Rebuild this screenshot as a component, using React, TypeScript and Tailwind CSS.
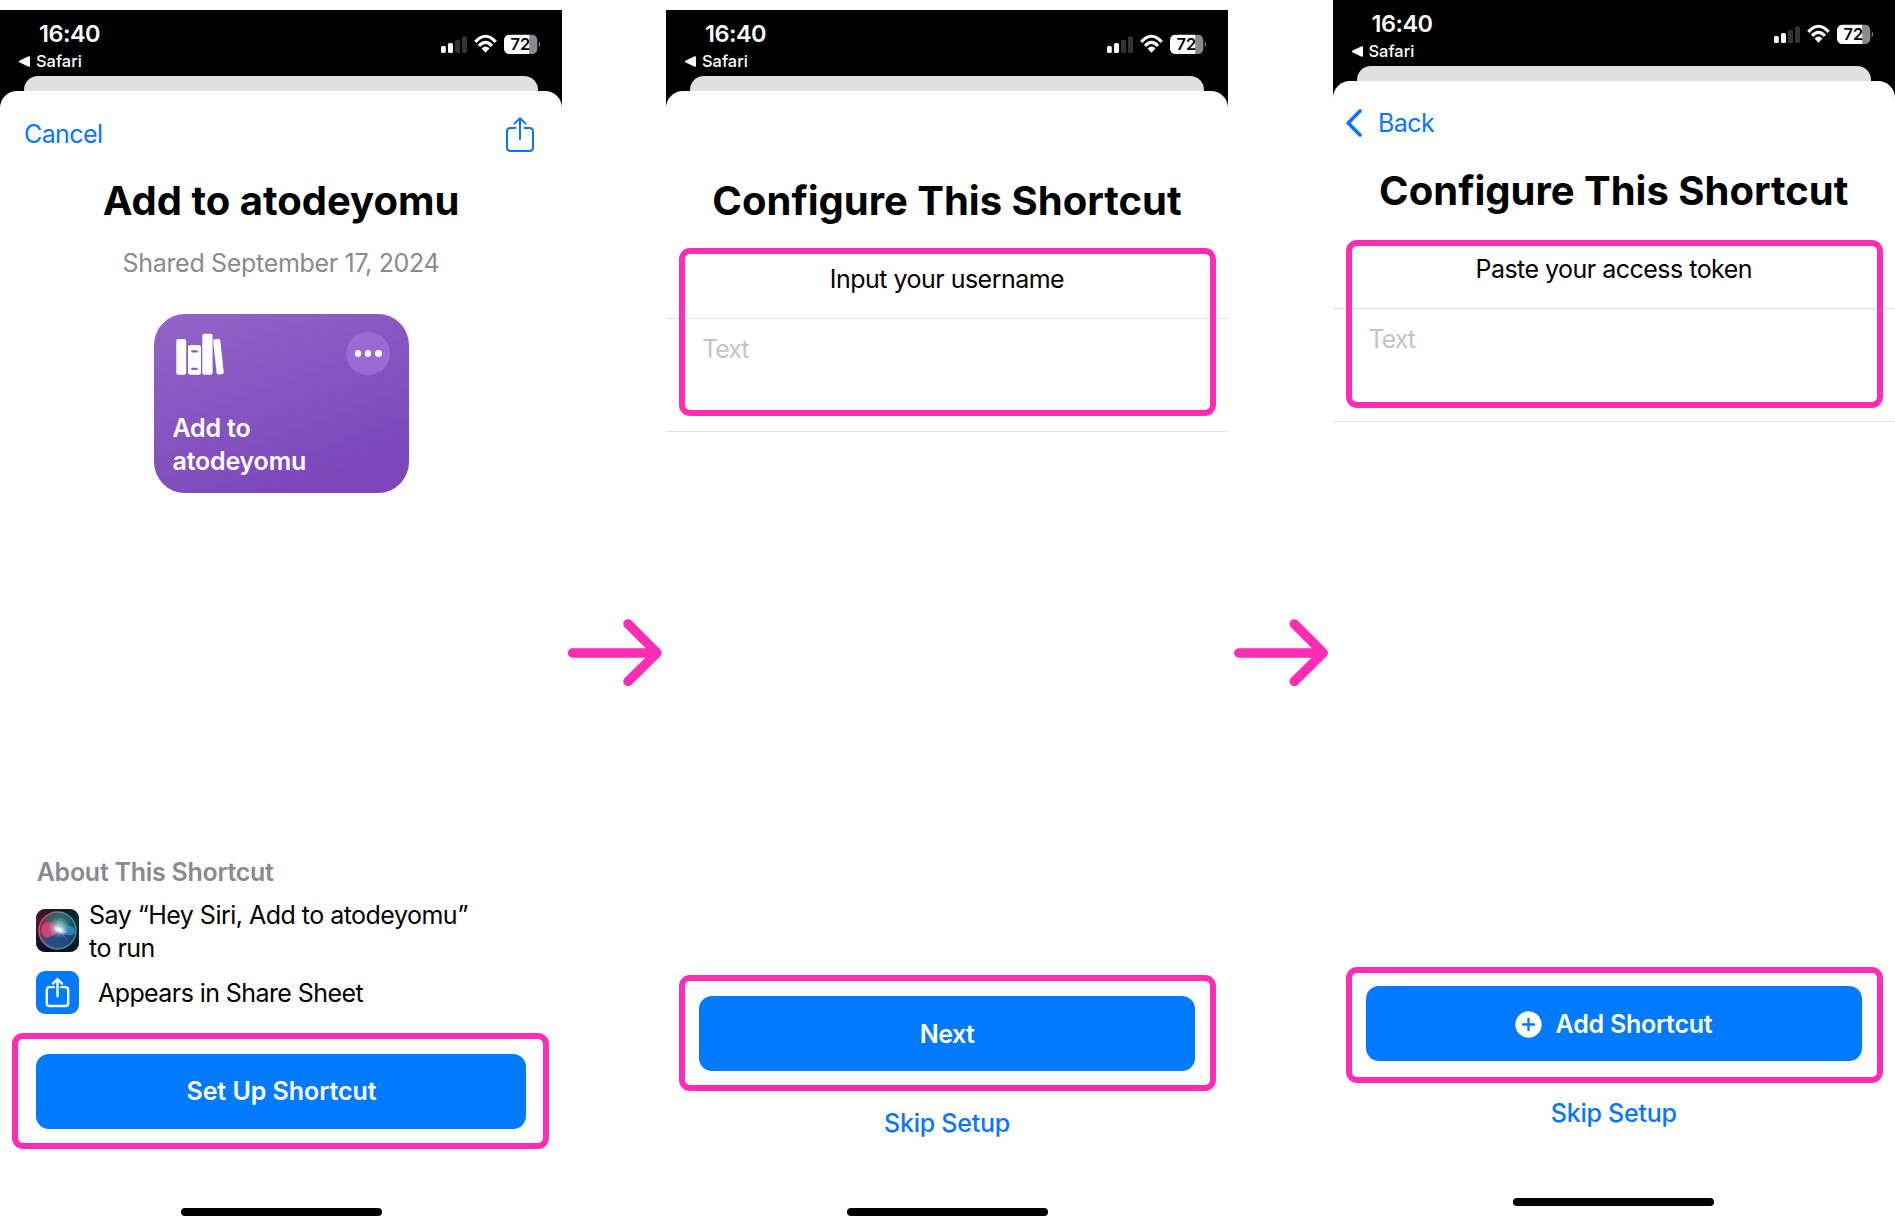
import React from 'react';

function StatusBar() {
  return (
    <div className="flex h-[66px] justify-between bg-black text-white">
      <div className="ml-[19px] pt-[9.5px]">
        <div className="ml-[20px] h-[28px] text-[23.5px] leading-[28px] font-semibold tracking-[-0.5px] whitespace-nowrap">16:40</div>
        <div className="flex h-[27px] items-center gap-[6px] text-[16.4px] font-medium">
          <svg width="11" height="11" viewBox="0 0 11 11" fill="white">
            <path d="M0.3 4.800L9.600 0.300Q11 -0.100 11 1.200V9.800Q11 11.100 9.600 10.700L0.300 6.200Q-0.400 5.500 0.300 4.800Z" />
          </svg>
          <span>Safari</span>
        </div>
      </div>
      <svg className="mt-[24px] mr-[21.5px] h-[22px] w-[101px]" viewBox="0 0 101 22">
        <rect x="1" y="12" width="4.800" height="7" rx="1.6" fill="white" />
        <rect x="8" y="9" width="5" height="10" rx="1.6" fill="white" />
        <rect x="15" y="5.700" width="5" height="13.300" rx="1.6" fill="#333" />
        <rect x="22" y="2.300" width="5" height="16.700" rx="1.6" fill="#333" />
        <path d="M35.300 7.900Q45.500 -3.400 55.700 7.900M39 11.900Q45.500 4.900 52 11.900" fill="none" stroke="white" strokeWidth="3.1" />
        <path d="M45.500 18.800L41.500 14.400Q45.500 10.800 49.500 14.400Z" fill="white" />
        <path d="M89 0.700H91.500Q97.300 0.700 97.300 6.500V14.200Q97.300 20 91.500 20H89Z" fill="#8a8a8a" />
        <path d="M70 0.700H89.200V20H70Q64 20 64 14.200V6.500Q64 0.700 70 0.700Z" fill="white" />
        <path d="M98.800 7Q101.400 10.300 98.800 13.700Z" fill="#8a8a8a" />
        <text x="80.300" y="16.300" textAnchor="middle" fontSize="16.400" fontWeight="600" fontFamily="Inter, sans-serif" fill="black">72</text>
      </svg>
    </div>
  );
}

function Phone({ children, className = '' }: { children: React.ReactNode; className?: string }) {
  return (
    <section className={'flex shrink-0 flex-col ' + className}>
      <StatusBar />
      <div className="h-[36px] bg-black px-[24px]">
        <div className="h-[36px] rounded-t-[14px] bg-[#e0e0e0]" />
      </div>
      <div className="-mt-[21px] flex flex-col rounded-t-[17px] bg-white">
        {children}
        <div className="mx-auto h-[8px] w-[201px] rounded-full bg-black" />
      </div>
    </section>
  );
}

function ShareGlyph({ className, stroke }: { className: string; stroke: number }) {
  return (
    <svg className={className} viewBox="0 0 28 35" fill="none" stroke="currentColor" strokeWidth={stroke} strokeLinecap="round" strokeLinejoin="round">
      <path d="M9.500 11H4.500Q1 11 1 14.500V30.500Q1 34 4.500 34H23.500Q27 34 27 30.500V14.500Q27 11 23.500 11H18.500M14 22V1.300M8.500 6.600L14 1.100L19.500 6.600" />
    </svg>
  );
}

function Arrow({ className }: { className: string }) {
  return (
    <svg className={'mt-[617px] h-[72px] shrink-0 overflow-visible ' + className} viewBox="0 0 104 72" fill="none" stroke="#ff2db5" strokeWidth="9.5" strokeLinecap="round" strokeLinejoin="round">
      <path d="M10.500 36H94M66 6.900L95 35.800L66 64.500" />
    </svg>
  );
}

function Title({ children }: { children: string }) {
  return <h1 className="h-[48px] text-center text-[40px] leading-[48px] font-bold">{children}</h1>;
}

function Field({ label, tracking, highlight }: { label: string; tracking: string; highlight: string }) {
  return (
    <div className="relative h-[207px]">
      <div className="h-[94px] border-b border-[#e2e2e4] pt-[39px]">
        <p className={'text-center text-[25px] leading-[30px] ' + tracking}>{label}</p>
      </div>
      <div className="h-[113px] border-b border-[#e2e2e4] pt-[15px] pl-[36px] text-[25px] leading-[30px] tracking-[-1px] text-[#c4c4c6]">
        Text
      </div>
      <div className={'absolute left-[13px] w-[537px] rounded-[11px] border-[6px] border-[#ff2db5] ' + highlight} />
    </div>
  );
}

function Action({ children, className }: { children: React.ReactNode; className: string }) {
  return (
    <div className={'ml-[13px] w-[537px] rounded-[11px] border-[6px] border-[#ff2db5] pr-[15px] pl-[14px] ' + className}>
      <div className="flex h-[75px] items-center justify-center rounded-[13px] bg-[#007aff] pt-[2px] text-[25px] font-semibold text-white">{children}</div>
    </div>
  );
}

function Skip({ className }: { className: string }) {
  return (
    <p className={'text-center text-[25px] leading-[30px] font-medium tracking-[-0.25px] text-[#0a75ff] ' + className}>Skip Setup</p>
  );
}

function Books() {
  return (
    <svg className="mt-[19px] ml-[22px] h-[42px] w-[49px]" viewBox="0 0 49 42" fill="white">
      <rect x="0.300" y="6" width="9.900" height="35.700" rx="2" />
      <path fillRule="evenodd" d="M14.200 12H22.800Q25 12 25 14.200V39.500Q25 41.700 22.800 41.700H14.200Q12 41.700 12 39.500V14.200Q12 12 14.200 12ZM16.200 17.300A1 1 0 0 0 16.200 19.500H20.800A1 1 0 0 0 20.800 17.300ZM16.200 34.700A1 1 0 0 0 16.200 36.900H20.800A1 1 0 0 0 20.800 34.700Z" />
      <rect x="26.300" y="0.700" width="10.300" height="41" rx="2" />
      <path d="M37.500 6.300L42.200 5.900Q44 5.800 44.300 7.600L47.700 39Q47.900 40.900 46 41.200L42.600 41.500Q40.900 41.600 40.600 39.800L37.300 10Z" />
    </svg>
  );
}

function Siri() {
  return (
    <svg className="h-[43px] w-[43px] shrink-0" viewBox="0 0 43 43">
      <defs>
        <linearGradient id="base" x1="0" y1="0" x2="1" y2="0.300">
          <stop offset="0" stopColor="#6a1030" />
          <stop offset="0.500" stopColor="#1c2433" />
          <stop offset="1" stopColor="#0c3530" />
        </linearGradient>
        <linearGradient id="shade" x1="0" y1="0" x2="0" y2="1">
          <stop offset="0" stopColor="#080c14" stopOpacity="0.400" />
          <stop offset="0.300" stopColor="#080c14" stopOpacity="0" />
          <stop offset="1" stopColor="#0c0a30" stopOpacity="0.900" />
        </linearGradient>
        <linearGradient id="ring" x1="0" y1="0.200" x2="1" y2="0.700">
          <stop offset="0" stopColor="#e0486f" />
          <stop offset="0.450" stopColor="#4f9a98" />
          <stop offset="1" stopColor="#3a8fa8" />
        </linearGradient>
        <linearGradient id="orb" x1="0" y1="0.300" x2="1" y2="0.600">
          <stop offset="0" stopColor="#8c2048" />
          <stop offset="0.500" stopColor="#3a6070" />
          <stop offset="1" stopColor="#0d4a5c" />
        </linearGradient>
        <radialGradient id="flare">
          <stop offset="0" stopColor="#ffffff" />
          <stop offset="0.300" stopColor="#f2fbff" stopOpacity="0.850" />
          <stop offset="1" stopColor="#a8dcec" stopOpacity="0" />
        </radialGradient>
      </defs>
      <rect width="43" height="43" rx="9" fill="url(#base)" />
      <rect width="43" height="43" rx="9" fill="url(#shade)" />
      <circle cx="21.500" cy="21.500" r="18.500" fill="url(#orb)" stroke="url(#ring)" strokeWidth="1.3" />
      <path d="M9 10Q21 0 34 11Q36 17 23 20Q14 14 9 10Z" fill="#1d7a68" opacity="0.550" />
      <path d="M8 32Q18 25 24 21Q32 25 35 31Q22 44 8 32Z" fill="#1d4590" opacity="0.700" />
      <path d="M23 21Q16 10 8.500 14Q4 18 5.500 24Q10 31 16 27Q20 25 23 21Z" fill="#dc4676" opacity="0.850" />
      <path d="M23 21Q30 14 37 18Q40 21 38 25Q33 29 23 21Z" fill="#2f8bd0" opacity="0.850" />
      <path d="M24 22L33.500 33L28 28Z" fill="#c87aa4" opacity="0.600" />
      <circle cx="23" cy="18.500" r="11" fill="url(#flare)" opacity="0.650" />
      <ellipse cx="23.500" cy="21" rx="8" ry="4.500" fill="url(#flare)" transform="rotate(24 23.500 21)" />
    </svg>
  );
}

export default function App() {
  return (
    <main className="flex h-[1228px] w-[1895px] overflow-hidden bg-white font-['Inter',sans-serif] text-black">
      <Phone className="mt-[10px] w-[562px]">
        <div className="flex h-[86px] items-start justify-between pr-[28.5px] pl-[24px] text-[#0a75ff]">
          <span className="pt-[27.5px] text-[25px] leading-[30px] tracking-[-0.6px]">Cancel</span>
          <ShareGlyph className="mt-[26px] h-[35px] w-[28px]" stroke={2} />
        </div>
        <Title>Add to atodeyomu</Title>
        <p className="mt-[23px] text-center text-[25px] leading-[30px] tracking-[-0.32px] text-[#8a8a8e]">Shared September 17, 2024</p>
        <div className="mt-[35.5px] ml-[154.3px] flex h-[179.5px] w-[254.5px] flex-col justify-between rounded-[31px] bg-linear-160 from-[#9265c8] to-[#7d46ba] to-85% text-white">
          <div className="flex justify-between">
            <Books />
            <div className="mt-[18px] mr-[19px] flex size-[43.5px] items-center justify-center gap-[3.5px] rounded-full bg-[#9b6ad2]">
              <i className="size-[6.7px] rounded-full bg-white" />
              <i className="size-[6.7px] rounded-full bg-white" />
              <i className="size-[6.7px] rounded-full bg-white" />
            </div>
          </div>
          <p className="pb-[15px] pl-[18.2px] text-[25px] leading-[33px] font-semibold tracking-[-0.2px]">
            Add to
            <br />
            atodeyomu
          </p>
        </div>
        <div className="mt-[364px] px-[36px]">
          <h2 className="pl-[0.7px] text-[25px] leading-[30px] font-semibold tracking-[-0.28px] text-[#8a8a8e]">About This Shortcut</h2>
          <div className="mt-[10px] flex items-center gap-[10px]">
            <Siri />
            <p className="-mb-[2px] pt-[2px] text-[25px] leading-[33px] tracking-[-0.52px] whitespace-nowrap">
              Say “Hey Siri, Add to atodeyomu”
              <br />
              to run
            </p>
          </div>
          <div className="mt-[8px] flex h-[43px] items-center gap-[19px]">
            <span className="flex size-[43px] justify-center rounded-[9px] bg-[#007aff] pt-[7px] text-white">
              <ShareGlyph className="h-[29px] w-[23px] overflow-visible" stroke={2.9} />
            </span>
            <p className="text-[25px] leading-[30px] tracking-[-0.58px]">Appears in Share Sheet</p>
          </div>
        </div>
        <div className="mt-[19px] ml-[12px] h-[116px] w-[537px] rounded-[11px] border-[6px] border-[#ff2db5] pt-[14.5px] pr-[17px] pl-[18px]">
          <div className="flex h-[75px] items-center justify-center rounded-[13px] bg-[#007aff] pt-[2px] pl-px text-[25px] font-semibold tracking-[-0.05px] text-white">Set Up Shortcut</div>
        </div>
        <div className="h-[59px]" />
      </Phone>
      <Arrow className="w-[104px]" />
      <Phone className="mt-[10px] w-[562px]">
        <div className="h-[86px]" />
        <Title>Configure This Shortcut</Title>
        <Field label="Input your username" tracking="tracking-[-0.52px]" highlight="top-[23px] h-[168px]" />
        <Action className="mt-[543px] h-[116px] pt-[15px]">
          <span className="tracking-[-0.6px]">Next</span>
        </Action>
        <Skip className="mt-[17px] mb-[70px]" />
      </Phone>
      <Arrow className="w-[104.5px]" />
      <Phone className="w-[562.5px]">
        <div className="flex h-[86px] items-start pl-[13.5px] text-[#0a75ff]">
          <svg className="mt-[28px] h-[28px] w-[16px]" viewBox="0 0 16 28" fill="none" stroke="currentColor" strokeWidth="3.6" strokeLinecap="round" strokeLinejoin="round">
            <path d="M14 2L2.200 14L14 26" />
          </svg>
          <span className="pt-[27px] pl-[16px] text-[25px] leading-[30px] tracking-[-0.55px]">Back</span>
        </div>
        <Title>Configure This Shortcut</Title>
        <Field label="Paste your access token" tracking="tracking-[-0.52px]" highlight="top-[25px] h-[168px]" />
        <Action className="mt-[545px] h-[116px] pt-[13px]">
          <svg className="mr-[14px] -mt-px h-[27px] w-[27px]" viewBox="0 0 27 27">
            <circle cx="13.500" cy="13.500" r="13.200" fill="white" />
            <path d="M13.500 8V19M8 13.500H19" stroke="#007aff" strokeWidth="2.400" strokeLinecap="round" />
          </svg>
          <span className="tracking-[-0.25px]">Add Shortcut</span>
        </Action>
        <Skip className="mt-[15px] mb-[70px]" />
      </Phone>
    </main>
  );
}
